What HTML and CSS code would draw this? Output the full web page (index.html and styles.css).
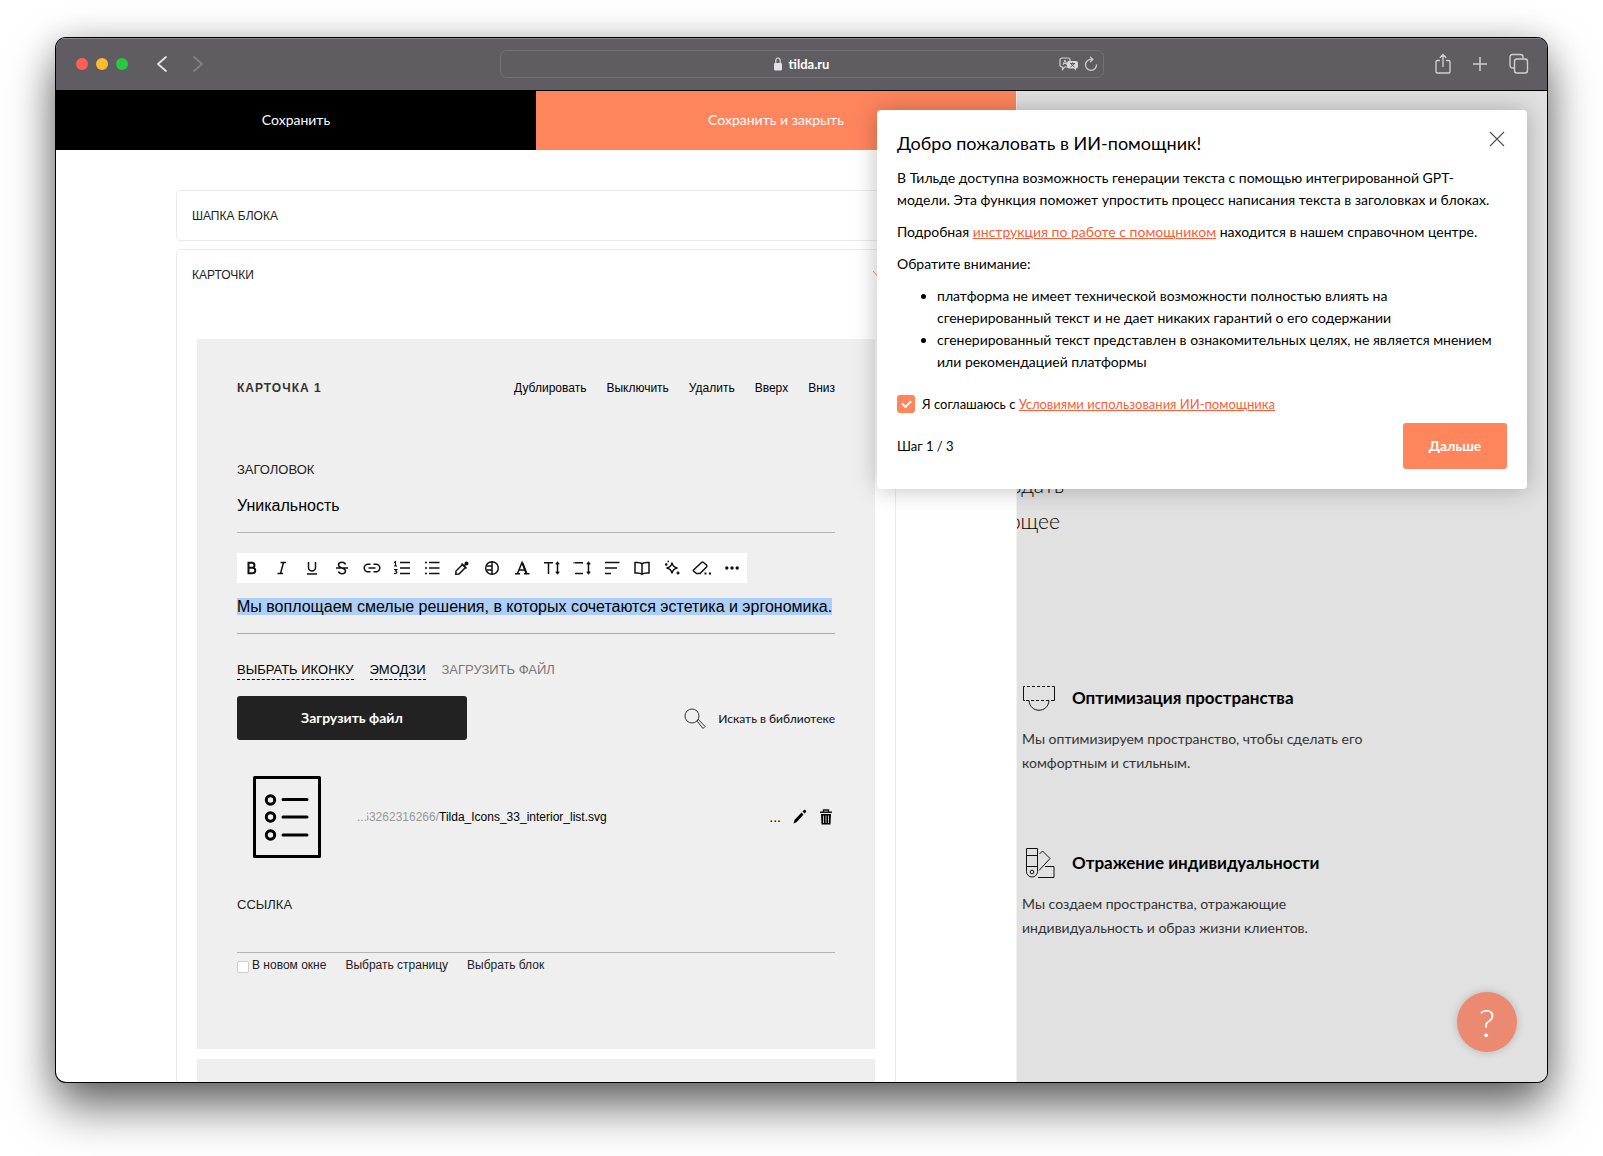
FILE: index.html
```html
<!DOCTYPE html>
<html lang="ru">
<head>
<meta charset="utf-8">
<meta name="viewport" content="width=device-width, initial-scale=1">
<title>tilda.ru</title>
<link rel="stylesheet" href="styles.css">
</head>
<body>
<div class="window">
  <header class="chrome">
    <div class="chrome-left">
      <span class="dot dot-close"></span>
      <span class="dot dot-min"></span>
      <span class="dot dot-max"></span>
      <button class="chrome-btn back" aria-label="Назад"><svg width="12" height="18" viewBox="0 0 12 18"><path d="M10 2 2 9l8 7" fill="none" stroke="currentColor" stroke-width="1.700" stroke-linecap="round" stroke-linejoin="round"/></svg></button>
      <button class="chrome-btn forward" aria-label="Вперёд"><svg width="12" height="18" viewBox="0 0 12 18"><path d="m2 2 8 7-8 7" fill="none" stroke="currentColor" stroke-width="1.700" stroke-linecap="round" stroke-linejoin="round"/></svg></button>
    </div>
    <div class="address">
      <span class="address-site">
        <svg width="8" height="14" viewBox="0 0 8 14"><path d="M1.800 6.500V4a2.200 3 0 0 1 4.400 0v2.500" fill="none" stroke="#dcdcde" stroke-width="1.200"/><rect y="6" width="8" height="7.500" rx="1.200" fill="#e2e1e3"/></svg>
        <span>tilda.ru</span>
      </span>
      <span class="address-tools">
        <svg width="20" height="14" viewBox="0 0 20 14"><path d="M3 1h6a2 2 0 0 1 2 2v1M8 10H5.500L3.500 12.500V10H3a2 2 0 0 1-2-2V3a2 2 0 0 1 2-2" fill="none" stroke="#d3d2d5" stroke-width="1.200"/><path d="M4 8l2-5 2 5M4.700 6.500h2.600" fill="none" stroke="#d3d2d5"/><path d="M10 4h7a2 2 0 0 1 2 2v3.500a2 2 0 0 1-2 2v2l-2-2h-5a2 2 0 0 1-2-2V6a2 2 0 0 1 2-2z" fill="#d9d8da"/><path d="M11 6.500h5M13.500 5.500v1M12 7l3.500 3M15 7l-3.500 3" stroke="#5f5d62" fill="none"/></svg>
        <svg width="14" height="16" viewBox="0 0 14 16"><path d="M12.500 8.500a5.500 5.500 0 1 1-5.500-5.200h1.500" fill="none" stroke="#cdccd0" stroke-width="1.300"/><path d="M6 .8 8.800 3.400 6 6" fill="none" stroke="#cdccd0" stroke-width="1.300"/></svg>
      </span>
    </div>
    <div class="chrome-right">
      <button class="chrome-btn" aria-label="Поделиться"><svg width="16" height="22" viewBox="0 0 16 22"><path d="M5 7.500H2.500A1.500 1.500 0 0 0 1 9v9.500A1.500 1.500 0 0 0 2.500 20h11a1.500 1.500 0 0 0 1.500-1.500V9a1.500 1.500 0 0 0-1.500-1.500H11M8 14V2M4.800 4.800 8 1.600l3.200 3.200" fill="none" stroke="currentColor" stroke-width="1.400"/></svg></button>
      <button class="chrome-btn" aria-label="Новая вкладка"><svg width="16" height="22" viewBox="0 0 16 22"><path d="M8 4v14M1 11h14" stroke="currentColor" stroke-width="1.500"/></svg></button>
      <button class="chrome-btn" aria-label="Все вкладки"><svg width="20" height="22" viewBox="0 0 20 22"><path d="M5 15H3.500A2.500 2.500 0 0 1 1 12.500V4a2.500 2.500 0 0 1 2.500-2.500h8A2.500 2.500 0 0 1 14 4v1.500" fill="none" stroke="currentColor" stroke-width="1.400"/><rect x="5.500" y="6" width="13" height="14" rx="2.500" fill="none" stroke="currentColor" stroke-width="1.400"/></svg></button>
    </div>
  </header>

  <div class="content">
    <main class="editor">
      <div class="savebar">
        <button class="save">Сохранить</button>
        <button class="save save-close">Сохранить и закрыть</button>
      </div>

      <div class="panels">
        <section class="panel">
          <h2 class="panel-head"><span>Шапка блока</span><svg width="9" height="14" viewBox="0 0 9 14"><path d="m1 2 6 5-6 5" fill="none" stroke="#bbb"/></svg></h2>
        </section>

        <section class="panel panel-open">
          <h2 class="panel-head"><span>Карточки</span><svg width="13" height="9" viewBox="0 0 13 9"><path d="m1 1 5.500 6L12 1" fill="none" stroke="#ff855d"/></svg></h2>

          <div class="cards">
            <article class="card">
              <div class="card-head">
                <h3 class="card-title">Карточка 1</h3>
                <nav class="card-actions">
                  <a href="#">Дублировать</a>
                  <a href="#">Выключить</a>
                  <a href="#">Удалить</a>
                  <a href="#">Вверх</a>
                  <a href="#">Вниз</a>
                </nav>
              </div>

              <label class="label" for="title">Заголовок</label>
              <input class="field" id="title" type="text" value="Уникальность">

              <div class="toolbar">
                <button aria-label="Полужирный"><svg viewBox="0 0 20 20"><path d="M6.500 4.700H10a2.500 2.500 0 0 1 0 5H6.500zM6.500 9.700h4a2.800 2.800 0 0 1 0 5.600h-4z" stroke-width="2"/></svg></button>
                <button aria-label="Курсив"><svg viewBox="0 0 20 20"><path d="M8.500 4.500H14M5.500 15.500H11M11.500 4.500l-3 11"/></svg></button>
                <button aria-label="Подчёркнутый"><svg viewBox="0 0 20 20"><path d="M6.500 4v5.500a3.500 3.500 0 0 0 7 0V4M5 16h10"/></svg></button>
                <button aria-label="Зачёркнутый"><svg viewBox="0 0 20 20"><path d="M13.500 6.500C13 5 11.800 4.300 10 4.300c-2 0-3.500 1-3.500 2.700 0 3.500 7 2.500 7 6 0 1.700-1.500 2.700-3.500 2.700-1.800 0-3-.8-3.500-2.200M4 10h12"/></svg></button>
                <button aria-label="Ссылка"><svg viewBox="0 0 20 20"><path d="M8.500 6.200H6a3.800 3.800 0 0 0 0 7.600h2.500M11.500 6.200H14a3.800 3.800 0 0 1 0 7.600h-2.500M6.500 10h7"/></svg></button>
                <button aria-label="Нумерованный список"><svg viewBox="0 0 20 20"><path d="M8 4.500h10M8 10h10M8 15.500h10"/><path d="m2 4.500 1.500-1V8M2 8h3M2 11.500h2.800L3.500 13c2 0 2 3-1.500 2.500" stroke-width="1.200"/></svg></button>
                <button aria-label="Маркированный список"><svg viewBox="0 0 20 20"><path d="M7 4.500h10.500M7 10h10.500M7 15.500h10.500M3 4.500h2M3 10h2M3 15.500h2"/></svg></button>
                <button aria-label="Цвет текста"><svg viewBox="0 0 20 20"><path d="m10.500 6.500 3 3-6.500 6.500-3.200.2.200-3.200z"/><path d="m9.500 5.500 5 5M12 8l3-3" stroke-width="1.500"/><circle cx="14.500" cy="5.500" r="1.300"/></svg></button>
                <button aria-label="Цвет фона"><svg viewBox="0 0 20 20"><circle cx="10" cy="10" r="6.300"/><path d="M10 3.700v12.600M5 8h5M5 12h5"/></svg></button>
                <button aria-label="Шрифт"><svg viewBox="0 0 20 20"><path d="M5.500 15.500 10 4.500l4.500 11M7 12h6M3 15.800h5M12 15.800h5.500"/><path d="m10.500 5 4 10.500" stroke-width="2"/></svg></button>
                <button aria-label="Размер текста"><svg viewBox="0 0 20 20"><path d="M2 4.800h9M6.500 4.800V16M15.500 5v10"/><path d="m13.800 6.300 1.700-2 1.700 2M13.800 13.700l1.700 2 1.700-2" stroke-width="1.300"/></svg></button>
                <button aria-label="Межстрочный интервал"><svg viewBox="0 0 20 20"><path d="M3 4.800h8M3 15.500h8M16.500 5v10M1.500 4.800h1"/><path d="m14.800 6.300 1.700-2 1.700 2M14.800 13.700l1.700 2 1.700-2" stroke-width="1.300"/></svg></button>
                <button aria-label="Выравнивание"><svg viewBox="0 0 20 20"><path d="M3 4.500h14.500M3 10h12M3 15.500h6"/></svg></button>
                <button aria-label="Справочник"><svg viewBox="0 0 20 20"><path d="M10 6c-1-1.500-3.500-1.800-7-1.500v10.500c3.500-.2 6 0 7 1.300 1-1.300 3.500-1.500 7-1.300V4.500C13.500 4.200 11 4.500 10 6zv10"/></svg></button>
                <button aria-label="ИИ-помощник"><svg viewBox="0 0 20 20"><path d="M10 4.500c.5 3.500 2 5 5.500 5.500-3.500.5-5 2-5.500 5.500-.5-3.500-2-5-5.500-5.500 3.500-.5 5-2 5.500-5.500z"/><path d="M3 6.500h2.500M4.200 5.200v2.500M14.500 15h3M16 13.500v3M5.500 3.500h1.500" stroke-width="1.600"/></svg></button>
                <button aria-label="Очистить"><svg viewBox="0 0 20 20"><path d="m1.500 12 8-7.500a1.500 1.500 0 0 1 2 0l3 2.500a1.500 1.500 0 0 1 0 2L8 15.500H4.500L1.500 13a.8.8 0 0 1 0-1z"/><path d="M12.500 15.500h2M17 15.500h2" stroke-width="2"/></svg></button>
                <button aria-label="Ещё"><svg viewBox="0 0 20 20" class="filled"><circle cx="4.800" cy="10" r="1.700"/><circle cx="10" cy="10" r="1.700"/><circle cx="15.200" cy="10" r="1.700"/></svg></button>
              </div>
              <div class="field field-active" contenteditable="true" role="textbox" aria-label="Описание"><mark>Мы воплощаем смелые решения, в которых сочетаются эстетика и эргономика.</mark></div>

              <div class="tabs">
                <a class="tab" href="#">Выбрать иконку</a>
                <a class="tab" href="#">Эмодзи</a>
                <span class="tab tab-current">Загрузить файл</span>
              </div>

              <div class="upload">
                <button class="upload-btn">Загрузить файл</button>
                <a class="library" href="#"><svg width="24" height="24" viewBox="0 0 24 24"><circle cx="9" cy="9" r="7" fill="none" stroke="#333"/><path d="m14 14 1.500-1.500 6.500 7-2 2z" fill="none" stroke="#333"/></svg><span>Искать в библиотеке</span></a>
              </div>

              <div class="file">
                <svg width="68" height="82" viewBox="0 0 68 82"><g fill="none" stroke="#000" stroke-width="3" stroke-linecap="round" stroke-linejoin="round"><path d="M1.500 1.500h65v79h-65z"/><circle cx="17.500" cy="24" r="4.200"/><circle cx="17.500" cy="41" r="4.200"/><circle cx="17.500" cy="59" r="4.200"/><path d="M30 23.500h24M30 41h24M30 59h24"/></g></svg>
                <div class="file-name"><span class="muted">...</span><span class="file-path muted"><span>63262316266/</span></span><span>Tilda_Icons_33_interior_list.svg</span></div>
                <div class="file-actions">
                  <button class="more" aria-label="Параметры">...</button>
                  <button aria-label="Редактировать"><svg width="14" height="16" viewBox="0 0 14 16"><path d="m.5 14.500 1-3.500 7-7.500 2 2-7 7.800zM9.500 2.500 11 1c1-.8 2.800.8 2 2l-1.500 1.500z"/></svg></button>
                  <button aria-label="Удалить файл"><svg width="14" height="16" viewBox="0 0 14 16"><path d="M1 3.300h12M4.500 3V1h5v2" fill="none" stroke="#111" stroke-width="1.400"/><path d="M2 5h10l-.5 10.500h-9z"/><path d="M4.500 6.500v7.500M7 6.500v7.500M9.500 6.500v7.500" stroke="#efefef" stroke-width=".8"/></svg></button>
                </div>
              </div>

              <label class="label" for="link">Ссылка</label>
              <input class="field" id="link" type="text">
              <div class="link-options">
                <label class="newtab"><input type="checkbox"><span>В новом окне</span></label>
                <a href="#">Выбрать страницу</a>
                <a href="#">Выбрать блок</a>
              </div>
            </article>
            <article class="card"></article>
          </div>
        </section>
      </div>
    </main>

    <aside class="preview">
      <p class="preview-intro"><span>здать</span><span class="intro-last">ющее</span></p>
      <section class="feature">
        <h3 class="feature-title"><svg width="34" height="30" viewBox="0 0 34 30"><g fill="none" stroke="#111"><path d="M3 3.500H1.500v14H3M31 3.500h1.500v14H31M7 17.500c1 13 19 13 20 0"/><path d="M5 3.500h26M4 17.500h27" stroke-dasharray="3 2"/></g></svg><span>Оптимизация пространства</span></h3>
        <p class="feature-text">Мы оптимизируем пространство, чтобы сделать его<br>комфортным и стильным.</p>
      </section>
      <section class="feature">
        <h3 class="feature-title"><svg width="34" height="30" viewBox="0 0 34 30"><g fill="none" stroke="#111"><path d="M4.500.5h11v23a5.500 5.500 0 0 1-11 0zM4.500 7.500h11M4.500 18.500h11M17.500 6l3-3 7.500 7.500-11 12M23 18.500h9v11H16"/><circle cx="10" cy="24" r="1.800"/></g></svg><span>Отражение индивидуальности</span></h3>
        <p class="feature-text">Мы создаем пространства, отражающие<br>индивидуальность и образ жизни клиентов.</p>
      </section>
    </aside>

    <div class="popup" role="dialog" aria-labelledby="popup-title">
      <div class="popup-head">
        <h2 id="popup-title">Добро пожаловать в ИИ-помощник!</h2>
        <button class="close" aria-label="Закрыть"><svg width="16" height="16" viewBox="0 0 16 16"><path d="m1 1 14 14M15 1 1 15" stroke="#555" stroke-width="1.200"/></svg></button>
      </div>
      <p>В Тильде доступна возможность генерации текста с помощью интегрированной GPT-<br>модели. Эта функция поможет упростить процесс написания текста в заголовках и блоках.</p>
      <p>Подробная <a href="#">инструкция по работе с помощником</a> находится в нашем справочном центре.</p>
      <p>Обратите внимание:</p>
      <ul>
        <li>платформа не имеет технической возможности полностью влиять на<br>сгенерированный текст и не дает никаких гарантий о его содержании</li>
        <li>сгенерированный текст представлен в ознакомительных целях, не является мнением<br>или рекомендацией платформы</li>
      </ul>
      <div class="agree">
        <input type="checkbox" id="agree" checked>
        <label for="agree">Я соглашаюсь с <a href="#">Условиями использования ИИ-помощника</a></label>
      </div>
      <div class="popup-foot">
        <span>Шаг 1 / 3</span>
        <button class="next">Дальше</button>
      </div>
    </div>

    <button class="help" aria-label="Помощь">?</button>
  </div>
</div>
</body>
</html>
```
FILE: styles.css
```css
* { box-sizing: border-box; }

:root {
  --accent: #ff855d;
  --ui: "Liberation Sans", Arial, sans-serif;
  --brand: Lato, "Open Sans", sans-serif;
}

body {
  margin: 0;
  padding: 38px 56px 74px;
  height: 100vh;
  background: #fff;
  font-family: var(--brand);
  color: #000;
  overflow: hidden;
}

h2, h3, p, ul { margin: 0; font-weight: 400; }
a { color: inherit; text-decoration: none; }
button { font: inherit; color: inherit; border: 0; padding: 0; background: none; }
svg { display: block; flex: none; }

.window {
  height: 100%;
  display: flex;
  flex-direction: column;
  border-radius: 10px;
  overflow: hidden;
  background: #fff;
  box-shadow: 0 0 0 1px #000, 0 24px 48px rgba(0, 0, 0, .6), 0 0 32px rgba(0, 0, 0, .16);
}

/* Browser toolbar */
.chrome {
  flex: none;
  height: 53px;
  display: grid;
  grid-template-columns: 1fr 604px 1fr;
  align-items: center;
  padding: 0 20px 2px;
  background: #5f5d62;
  border-top: 1px solid #89878c;
  border-bottom: 1px solid #000;
}
.chrome-left, .chrome-right { display: flex; align-items: center; }
.chrome-left { gap: 8px; }
.chrome-right { justify-content: flex-end; gap: 21px; margin-right: -2px; }
.chrome-btn { color: #cfced2; }
.dot { width: 12px; height: 12px; border-radius: 50%; }
.dot-close { background: #ff5f57; }
.dot-min { background: #febc2e; }
.dot-max { background: #28c840; }
.back { margin-left: 20px; color: #e6e6e8; }
.forward { margin-left: 16px; color: #838187; }
.address {
  height: 28px;
  display: grid;
  grid-template-columns: 1fr auto 1fr;
  align-items: center;
  padding: 0 5px;
  border: 1px solid #747277;
  border-radius: 7px;
  color: #fff;
  font: 700 13px/16px var(--brand);
}
.address-site { grid-column: 2; display: flex; align-items: center; gap: 7px; }
.address-tools { display: flex; justify-content: flex-end; align-items: center; gap: 5px; }

.content { position: relative; flex: 1; min-height: 0; display: flex; }

/* Editor column */
.editor { flex: 0 0 960px; display: flex; flex-direction: column; overflow: hidden; }
.savebar { flex: none; display: grid; grid-template-columns: 1fr 1fr; height: 59px; }
.save { padding-bottom: 2px; background: #000; color: #fff; font-size: 14px; }
.save-close { background: var(--accent); }
.panels { padding: 40px 120px 0; display: flex; flex-direction: column; gap: 8px; }
.panel { border: 1px solid #ebebeb; border-radius: 4px; }
.panel-head {
  height: 49px;
  display: flex;
  justify-content: space-between;
  align-items: center;
  padding: 0 10px 0 15px;
  font: 12px/16px var(--ui);
  text-transform: uppercase;
  color: #222;
}
.cards { padding: 40px 20px 0; display: flex; flex-direction: column; gap: 10px; }
.card { min-height: 200px; padding: 40px; background: #efefef; font: 12px/16px var(--ui); }
.card:first-child { min-height: 710px; }
.card-head { display: flex; justify-content: space-between; align-items: center; height: 18px; margin-bottom: 64px; }
.card-title { font: 700 12px/16px var(--ui); letter-spacing: 1px; text-transform: uppercase; color: #333; }
.card-actions { display: flex; gap: 20px; }
.label { display: block; font-size: 13px; line-height: 18px; text-transform: uppercase; color: #222; }
.field {
  display: block;
  width: 100%;
  height: 54px;
  padding: 0;
  border: 0;
  border-bottom: 1px solid #b3b3b3;
  border-radius: 0;
  background: none;
  font: 16px/18px var(--ui);
  color: #000;
}
.toolbar {
  display: flex;
  width: max-content;
  height: 30px;
  margin-top: 20px;
  background: #fff;
}
.toolbar button { width: 30px; display: flex; align-items: center; justify-content: center; }
.toolbar svg { width: 20px; height: 20px; fill: none; stroke: #111; stroke-width: 1.5px; }
.toolbar .filled { fill: #111; stroke: none; }
.field-active { height: 51px; padding: 15px 0; border-bottom-color: #f98e74; white-space: nowrap; }
.field-active mark { background: #accef7; color: #000; }
.tabs { display: flex; gap: 16px; margin-top: 26px; font-size: 13px; text-transform: uppercase; }
.tab { height: 20px; line-height: 20px; border-bottom: 1px dashed #000; }
.tab-current { color: #777; border-bottom: 0; }
.upload { display: flex; justify-content: space-between; align-items: center; margin-top: 16px; }
.upload-btn { width: 230px; height: 44px; border-radius: 3px; background: #222; color: #fff; font: 700 14px/20px var(--brand); }
.library { display: flex; align-items: center; gap: 11px; padding-top: 2px; font: 500 12px/20px var(--brand); color: #222; }
.file { display: flex; align-items: center; margin-top: 36px; padding-left: 16px; }
.file-name { display: flex; flex: 1; margin-left: 36px; }
.file-path { display: flex; justify-content: flex-end; width: 72px; overflow: hidden; }
.muted { color: #999; }
.file-actions { display: flex; align-items: center; gap: 12px; padding-right: 2px; }
.more { font-size: 14px; }
.file + .label { margin-top: 38px; }
.file + .label + .field { height: 39px; }
.link-options { display: flex; gap: 19px; margin-top: 5px; font-size: 12px; line-height: 14px; color: #222; }
.newtab { display: flex; gap: 3px; }
.newtab input {
  appearance: none;
  width: 12px;
  height: 12px;
  margin: 3px 0 0;
  border: 1px solid #ccc;
  border-radius: 2px;
  background: #fff;
}

/* Site preview */
.preview { flex: 1; min-width: 0; padding: 376px 5px 0; background: #e1e1e1; border-left: 1px solid #f2f2f2; overflow: hidden; }
.preview-intro {
  display: flex;
  flex-direction: column;
  align-items: flex-end;
  width: 47px;
  margin-left: -5px;
  overflow: hidden;
  font-size: 21px;
  line-height: 36px;
  font-weight: 300;
}
.intro-last { padding-right: 4px; }
.feature { margin-top: 144px; }
.feature + .feature { margin-top: 73px; }
.feature-title { display: flex; align-items: center; gap: 16px; height: 30px; font-size: 17px; line-height: 24px; font-weight: 700; }
.feature-text { margin-top: 14px; font-size: 14px; line-height: 24px; color: #333; white-space: nowrap; }

/* Assistant popup */
.popup {
  position: absolute;
  top: 19px;
  right: 20px;
  width: 650px;
  padding: 20px;
  border-radius: 4px;
  background: #fff;
  box-shadow: 0 0 24px rgba(0, 0, 0, .25);
  font-size: 14px;
  line-height: 22px;
}
.popup p, .popup ul { margin-bottom: 10px; white-space: nowrap; }
.popup ul { padding-left: 40px; }
.popup a { color: #f9603a; text-decoration: underline; }
.popup-head { display: flex; justify-content: space-between; margin-bottom: 11px; }
.popup-head h2 { font-size: 18px; line-height: 26px; }
.close { width: 20px; height: 18px; display: flex; align-items: center; justify-content: center; }
.agree { display: flex; align-items: center; gap: 7px; margin-top: 21px; font-size: 13px; line-height: 20px; }
.agree input {
  appearance: none;
  width: 18px;
  height: 18px;
  margin: 0;
  border-radius: 3px;
  background: var(--accent);
  display: flex;
  align-items: center;
  justify-content: center;
}
.agree input:checked::after {
  content: "";
  width: 7px;
  height: 4px;
  border: solid #fff;
  border-width: 0 0 2px 2px;
  transform: translateY(-1px) rotate(-45deg);
}
.popup-foot { display: flex; justify-content: space-between; align-items: center; margin-top: 9px; font-size: 13px; }
.next { width: 104px; height: 46px; border-radius: 3px; background: var(--accent); color: #fff; font-size: 14px; font-weight: 700; }

.help {
  position: absolute;
  right: 30px;
  bottom: 30px;
  width: 60px;
  height: 60px;
  border-radius: 50%;
  background: #eb8a70;
  color: #fff;
  font-size: 38px;
  font-weight: 300;
  box-shadow: 0 0 8px rgba(0, 0, 0, .2);
}
```
